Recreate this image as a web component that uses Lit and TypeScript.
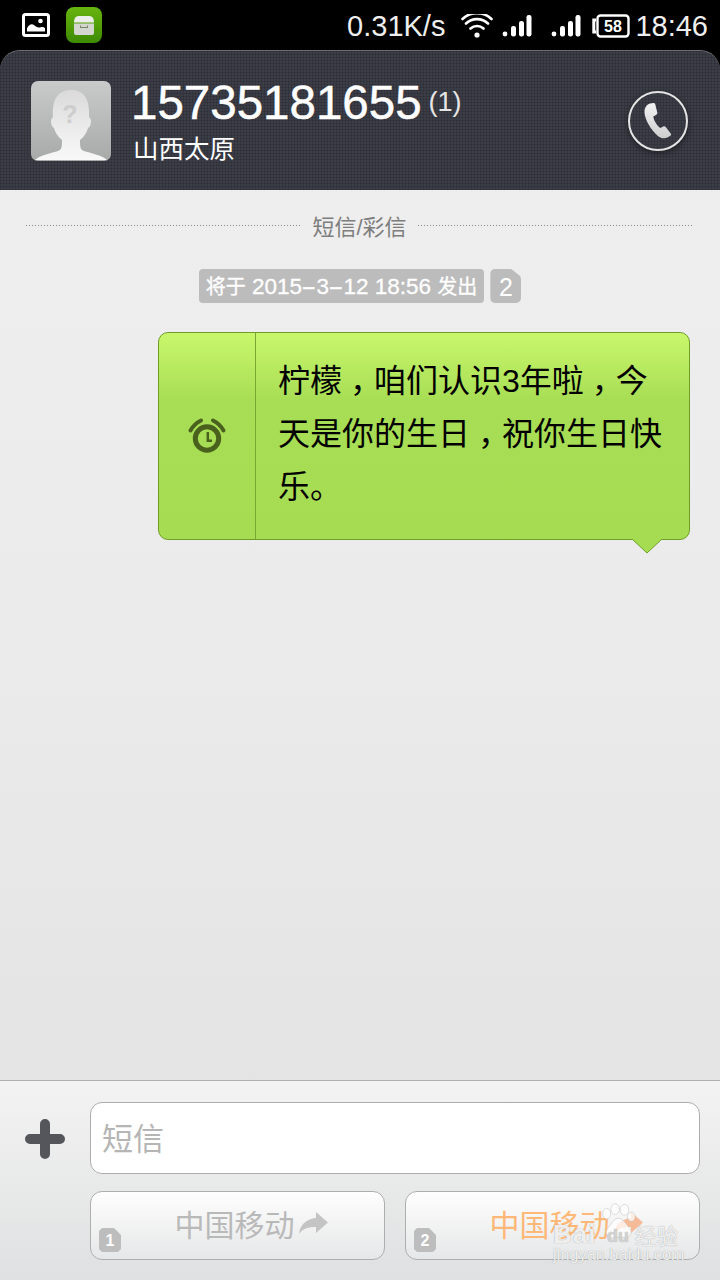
import { LitElement, html, css, svg, unsafeCSS } from "lit";
import { customElement } from "lit/decorators.js";

const SANS = unsafeCSS(`"Liberation Sans", "Noto Sans CJK SC", sans-serif`);

const bars = (cls: string) => svg`<svg class=${cls} width="30" height="24" viewBox="0 0 30 24"><circle cx="3" cy="20" r="2.4" fill="#fff"/><rect x="9" y="12" width="5" height="10.5" rx="2.2" fill="#fff"/><rect x="17" y="7" width="5" height="15.5" rx="2.2" fill="#fff" /><rect x="24.5" y="1" width="5" height="21.5" rx="2.2" fill="#fff"/></svg>`;

const arrow = (c: string) => svg`<svg class="arrow" width="31" height="24" viewBox="0 0 31 24"><path d="M18 1 30 11.500 18 22v-6C11 16 5 17 1 23c1-9 7-15 17-16z" fill=${c}/></svg>`;

@customElement("app-root")
export class AppRoot extends LitElement {
  static styles = css`
    :host { display: block; width: 720px; height: 1280px; overflow: hidden; background: #000; font-family: ${SANS}; position: relative; }
    .screen { width: 720px; height: 1280px; display: flex; flex-direction: column; background: #000; }

    .status { height: 50px; flex: none; display: flex; align-items: center; padding: 1px 12px 0 22px; box-sizing: border-box; color: #fff; }
    .notif { display: flex; align-items: center; gap: 16px; margin-top: -1px; }
    .app { width: 36px; height: 36px; border-radius: 8px; background: linear-gradient(#68b40f, #3d8b00); display: flex; align-items: center; justify-content: center; }
    .spacer { flex: 1; }
    .speed { font-size: 29px; color: #efefef; margin: 2px 16px 0 0; }
    .wifi { margin-right: 9px; }
    .bars { display: block; margin-right: 19px; }
    .bars.last { margin-right: 11px; }
    .batt { width: 38px; height: 24px; margin-right: 5px; display: block; }
    .clock { font-size: 29px; color: #efefef; margin-top: 2px; }

    .head {
      height: 140px; flex: none; display: flex; align-items: center; padding: 0 32px 0 31px;
      border-radius: 20px 20px 0 0; border-top: 1px solid #6b6d72; box-sizing: border-box;
      background-color: #3c3e47;
      background-image: linear-gradient(rgba(24,26,32,.22) 1px, transparent 1px), linear-gradient(90deg, rgba(24,26,32,.22) 1px, transparent 1px);
      background-size: 3px 3px;
    }
    .avatar { width: 80px; height: 80px; margin-right: 20px; border-radius: 7px; background: linear-gradient(#c9caca, #a8aaaa); overflow: hidden; flex: none; margin-top: 1px; }
    .who { display: flex; flex-direction: column; flex: 1; }
    .nameline { display: flex; align-items: flex-start; color: #fff; height: 56px; }
    .num { font-size: 47.5px; line-height: 56px; -webkit-text-stroke: .5px #fff; }
    .cnt { font-size: 27px; margin: 9px 0 0 7px; line-height: 36px; color: #e6e6e6; }
    .loc { font-size: 25.5px; line-height: 36px; color: #fff; margin-left: 2px; }
    .call { width: 60px; height: 60px; flex: none; box-sizing: border-box; border: 2.5px solid #e4e4e4; border-radius: 50%; display: flex; align-items: center; justify-content: center; box-shadow: 0 2px 6px rgba(0,0,0,.45); }

    .body { height: 890px; flex: none; background: linear-gradient(#eeeeee, #ebebeb 50%, #e4e4e4); display: flex; flex-direction: column; }
    .divider { display: flex; align-items: center; padding: 0 27px 0 26px; gap: 11px; margin-top: 22px; height: 26px; color: #7d7d7d; font-size: 22px; }
    .divider i { flex: 1; height: 1px; background: repeating-linear-gradient(90deg, #8f8f8f 0 1px, transparent 1px 3px); }
    .sched { display: flex; justify-content: center; gap: 6px; margin-top: 31px; height: 34px; }
    .pill { background: #bcbcbc; color: #fff; height: 34px; line-height: 36px; border-radius: 4px; padding: 0 7px; font-size: 22.5px; -webkit-text-stroke: .3px #fff; white-space: nowrap; }
    .pill .c { font-size: 20px; }
    .pill .h { display: inline-block; margin: 0 3.5px; transform: scaleX(2); }
    .sim-big { width: 31px; box-sizing: border-box; padding: 0; text-align: center; font-size: 25px; border-radius: 5px 10px 5px 5px; -webkit-text-stroke: 0; clip-path: polygon(0 0, 21px 0, 100% 8px, 100% 100%, 0 100%); }

    .bubble-wrap { margin: 29px 30px 0 158px; position: relative; height: 208px; }
    .bubble { height: 208px; box-sizing: border-box; border: 1px solid #6f9e28; border-radius: 10px; background: linear-gradient(#c9f76c, #a8de55 32%, #a6dc52); display: flex; }
    .al { width: 96px; flex: none; border-right: 1px solid #79a832; display: flex; align-items: center; justify-content: center; }
    .msg { flex: 1; padding: 22px 0 0 22px; font-size: 32px; line-height: 53px; color: #000; white-space: nowrap; }
    .p { font-feature-settings: "halt"; margin: 0 8px; }
    .tail { position: absolute; right: 28px; bottom: -14px; width: 30px; height: 15px; display: block; }

    .foot { flex: 1; box-sizing: border-box; border-top: 1px solid #b0b0b0; background: linear-gradient(#f3f3f3, #dfe0e1); padding: 21px 20px 0 25px; display: grid; grid-template-columns: 40px 1fr; column-gap: 25px; grid-template-rows: 72px 69px; row-gap: 17px; }
    .plus { align-self: center; justify-self: center; display: block; margin-top: 2px; }
    .input { background: #fff; border: 1px solid #adadad; border-radius: 12px; box-sizing: border-box; font-size: 31px; color: #b5b5b5; display: flex; align-items: center; padding: 0 0 4px 11px; }
    .sims { grid-column: 2; display: flex; gap: 20px; }
    .send { flex: 1; position: relative; box-sizing: border-box; border: 1px solid #aeaeae; border-radius: 12px; background: linear-gradient(#fefefe, #e6e7e8); font-size: 30px; color: #b9b9b9; display: flex; align-items: center; justify-content: center; padding: 0 0 6px 28px; }
    .send.alt { color: #ffb878; }
    .arrow { margin-left: 3px; display: block; }
    .tag { position: absolute; left: 8px; bottom: 7px; width: 22px; height: 24px; background: #bdbdbd; color: #fff; font-size: 16px; font-weight: 700; line-height: 25px; text-align: center; clip-path: polygon(3px 0, 15px 0, 22px 7px, 22px 21px, 19px 24px, 3px 24px, 0 21px, 0 3px); }

    .mark { position: absolute; left: 550px; top: 1199px; width: 132px; height: 70px; color: rgba(255,255,255,.85); pointer-events: none; }
    .mark span { position: absolute; white-space: nowrap; text-shadow: 0 0 1px rgba(140,140,140,.9); }
    .mark .b { left: 3px; top: 20px; font-size: 26px; font-weight: 700; letter-spacing: 1px; }
    .mark .d { left: 57px; top: 27px; font-size: 18px; font-weight: 700; color: rgba(225,225,225,.8); }
    .mark .j { left: 3px; top: 47px; font-size: 16px; letter-spacing: .15px; }
    .mark .z { left: 85px; top: 20px; font-size: 21.5px; }
    .mark svg { position: absolute; left: 52px; top: 3px; }
  `;

  render() {
    return html`
      <div class="screen">
        <div class="status">
          <div class="notif">
            <svg width="28" height="24" viewBox="0 0 28 24">
              <rect x="1.500" y="1.500" width="25" height="21" rx="2" fill="none" stroke="#fff" stroke-width="3"/>
              <path d="M5 18.500v-3.200c2-3.600 4.600-5 7-3.200 2 1.600 3.800 3 6.500 2.200 2-.6 3.500 0 4.500 1v3.200z" fill="#fff"/>
              <circle cx="18.500" cy="8" r="2.300" fill="#fff"/>
            </svg>
            <div class="app">
              <svg width="20" height="19" viewBox="0 0 20 19">
                <path d="M0 6.500C0 2 2 0 5 0h10c3 0 5 2 5 6.500z" fill="#eceeea"/>
                <path d="M0 7.500h20V17q0 2-2 2H2q-2 0-2-2z" fill="#d4d7d0"/>
                <path d="M6.500 9.500v2h7v-2" fill="none" stroke="#78876a" stroke-width="1.100"/>
              </svg>
            </div>
          </div>
          <div class="spacer"></div>
          <span class="speed">0.31K/s</span>
          <svg class="wifi" width="32" height="24" viewBox="0 0 32 24">
            <circle cx="16" cy="21" r="2.600" fill="#fff"/>
            <path d="M9.500 14.500a9.500 9.500 0 0 1 13 0M5 9.500a16 16 0 0 1 22 0M1.500 5a21 21 0 0 1 29 0" fill="none" stroke="#fff" stroke-width="2.600" stroke-linecap="round"/>
          </svg>
          ${bars("bars")}
          ${bars("bars last")}
          <svg class="batt" viewBox="0 0 38 24">
            <path d="M4 6H1.800V18H4" fill="none" stroke="#fff" stroke-width="3"/>
            <rect x="5.500" y="1.500" width="31" height="21" rx="3" fill="none" stroke="#fff" stroke-width="2.400"/>
            <text x="21" y="18" text-anchor="middle" font-size="16" font-weight="700" fill="#fff" font-family="Liberation Sans">58</text>
          </svg>
          <span class="clock">18:46</span>
        </div>

        <div class="head">
          <div class="avatar">
            <svg width="80" height="80" viewBox="0 0 80 80">
              <defs>
                <linearGradient id="fg" x1="0" y1="0" x2="0" y2="1"><stop offset="0" stop-color="#dadada"/><stop offset=".7" stop-color="#f0f0f0"/><stop offset="1" stop-color="#f8f8f8"/></linearGradient>
              </defs>
              <path d="M4 79c5-5 17-7 23-9 3-1 4-3 4-9v-2c-4-3-7-8-8-12-2-1-3-4-3-7 0-2 1-3 2-4C21 18 27 9 40 9s19 9 18 27c1 1 2 2 2 4 0 3-1 6-3 7-1 4-4 9-8 12v2c0 6 1 8 4 9 6 2 18 4 23 9z" fill="url(#fg)"/>
              <text x="39" y="42" text-anchor="middle" font-size="25" font-weight="700" fill="#cdcdcd" font-family="Liberation Sans">?</text>
            </svg>
          </div>
          <div class="who">
            <div class="nameline"><span class="num">15735181655</span><span class="cnt">(1)</span></div>
            <div class="loc">山西太原</div>
          </div>
          <div class="call">
            <svg width="30" height="38" viewBox="0 0 30 38">
              <defs><linearGradient id="pg" x1="0" y1="0" x2="0" y2="1"><stop offset="0" stop-color="#f2f2f2"/><stop offset="1" stop-color="#cfcfcf"/></linearGradient></defs>
              <path d="M7 1.500 10.500 1c1 0 1.500.5 1.800 1.500l2 8c.2 1 0 1.700-1 2.300l-3 1.700c.5 4 3.500 9 7 11.500l3-1.500c1-.5 1.800-.3 2.400.5l5 6.500c.6.8.5 1.600-.3 2.200l-3 1.800c-3 1.500-6.500.8-9.500-1.500C8 28 2 18 1.500 10.500 1.300 6 3.500 2.500 7 1.500z" fill="url(#pg)"/>
            </svg>
          </div>
        </div>

        <div class="body">
          <div class="divider"><i></i><span>短信/彩信</span><i></i></div>
          <div class="sched">
            <div class="pill"><span class="c">将于</span> 2015<span class="h">-</span>3<span class="h">-</span>12 18:56 <span class="c">发出</span></div>
            <div class="pill sim-big">2</div>
          </div>
          <div class="bubble-wrap">
            <div class="bubble">
              <div class="al">
                <svg width="40" height="38" viewBox="0 0 40 38">
                  <circle cx="20" cy="21.500" r="11.700" fill="none" stroke="#4a611e" stroke-width="5"/>
                  <path d="M20.800 15v8.700H25" fill="none" stroke="#4a611e" stroke-width="2.500"/>
                  <path d="M3.500 13.500Q7 7 14 3.500M36.500 13.500Q33 7 26 3.500" fill="none" stroke="#4a611e" stroke-width="4" stroke-linecap="round"/>
                </svg>
              </div>
              <div class="msg">
                <div>柠檬<span class="p">，</span>咱们认识3年啦<span class="p">，</span>今</div>
                <div>天是你的生日<span class="p">，</span>祝你生日快</div>
                <div>乐。</div>
              </div>
            </div>
            <svg class="tail" viewBox="0 0 30 15"><path d="M0 0 15 14 30 0" fill="#a6dc52" stroke="#6f9e28" stroke-width="1"/><rect x="1" y="-1" width="28" height="1.500" fill="#a6dc52"/></svg>
          </div>
        </div>

        <div class="foot">
          <svg class="plus" width="40" height="40" viewBox="0 0 40 40"><path d="M20 5v30M5 20h30" stroke="#54565b" stroke-width="10" stroke-linecap="round"/></svg>
          <div class="input">短信</div>
          <div class="sims">
            <div class="send">
              <span class="tag">1</span><span>中国移动</span>${arrow("#c4c4c4")}
            </div>
            <div class="send alt">
              <span class="tag">2</span><span>中国移动</span>${arrow("#f5bb98")}
            </div>
          </div>
        </div>
      </div>
      <div class="mark" aria-hidden="true">
        <svg width="34" height="42" viewBox="0 0 44 50" fill="rgba(255,255,255,.72)" stroke="rgba(170,170,170,.6)" stroke-width=".8">
          <ellipse cx="6" cy="13" rx="5" ry="7"/><ellipse cx="17" cy="7" rx="5.500" ry="7"/><ellipse cx="29" cy="8" rx="5.500" ry="7"/><ellipse cx="38" cy="17" rx="5" ry="6"/>
          <path d="M21 19c6 0 10 7 15 13 4 5 1 13-7 12-5-1-10-1-15 0-8 1-11-7-7-12 5-5 8-13 14-13z"/>
        </svg>
        <span class="b">Bai</span><span class="d">du</span>
        <span class="z">经验</span>
        <span class="j">jingyan.baidu.com</span>
      </div>
    `;
  }
}
